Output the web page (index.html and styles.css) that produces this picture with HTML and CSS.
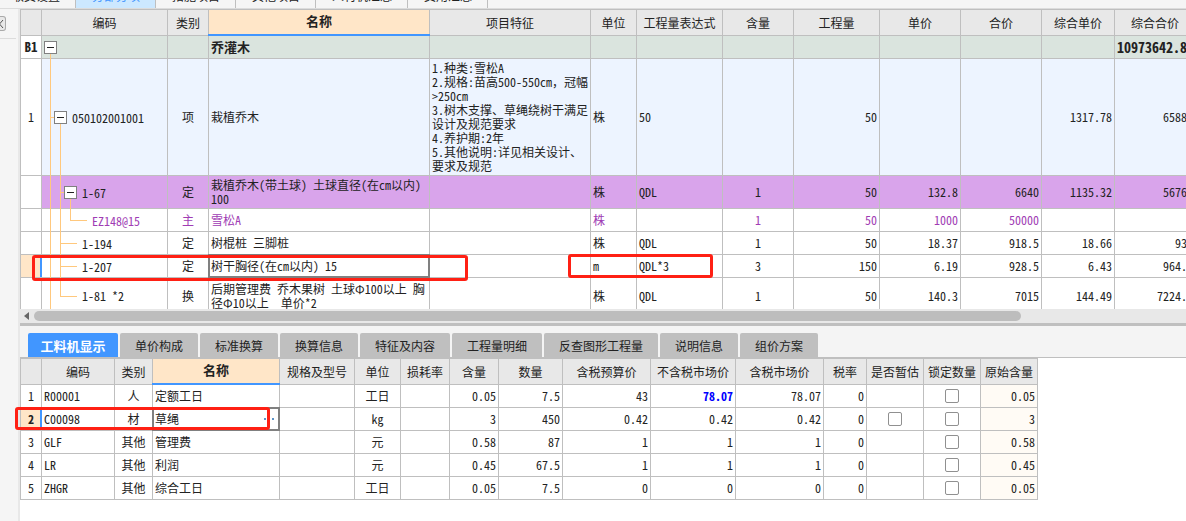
FILE: index.html
```html
<!DOCTYPE html>
<html lang="zh-CN">
<head>
<meta charset="utf-8">
<title>分部分项</title>
<link rel="stylesheet" href="styles.css">
</head>
<body>
<div class="app">
  <nav class="top-tabs">
    <button class="top-tab">取费设置</button>
    <button class="top-tab active">分部分项</button>
    <button class="top-tab">措施项目</button>
    <button class="top-tab">其他项目</button>
    <button class="top-tab">人材机汇总</button>
    <button class="top-tab">费用汇总</button>
  </nav>
  <div class="main">
    <aside class="side">
      <button class="expand" aria-label="展开">
        <svg width="7" height="10" viewBox="0 0 7 10"><path d="M6 1 2.500 5 6 9M2.500 2v6" fill="none" stroke="#555"/></svg>
      </button>
    </aside>
    <main class="work">
      <div class="grid-view">
        <table class="grid bill">
          <colgroup><col class="w21"><col class="w126"><col class="w41"><col class="w221"><col class="w161"><col class="w46"><col class="w86"><col class="w71"><col class="w86"><col class="w81"><col class="w81"><col class="w73"><col class="w81"></colgroup>
          <thead>
            <tr><th></th><th>编码</th><th>类别</th><th class="current">名称</th><th>项目特征</th><th>单位</th><th>工程量表达式</th><th>含量</th><th>工程量</th><th>单价</th><th>合价</th><th>综合单价</th><th>综合合价</th></tr>
          </thead>
          <tbody>
            <tr class="section">
              <td class="idx">B1</td>
              <td class="tree l1"><i class="v v1 lower"></i><button class="toggle" aria-label="折叠"></button></td>
              <td></td><td>乔灌木</td><td></td><td></td><td></td><td></td><td></td><td></td><td></td><td></td><td class="num">10973642.82</td>
            </tr>
            <tr class="item">
              <td class="idx">1</td>
              <td class="tree l2"><i class="v v1"></i><i class="v v2 lower"></i><i class="h h1"></i><button class="toggle" aria-label="折叠"></button><span>050102001001</span></td>
              <td class="mid">项</td><td>栽植乔木</td>
              <td class="feature">1.种类:雪松A<br>2.规格:苗高500-550cm<span class="wide">，</span>冠幅<br>&gt;250cm<br>3.树木支撑、草绳绕树干满足<br>设计及规范要求<br>4.养护期:2年<br>5.其他说明:详见相关设计、<br>要求及规范</td>
              <td>株</td><td>50</td><td></td><td class="num">50</td><td></td><td></td><td class="num">1317.78</td><td class="num">65889</td>
            </tr>
            <tr class="picked">
              <td class="idx"></td>
              <td class="tree l3"><i class="v v1"></i><i class="v v2"></i><i class="v v3 lower"></i><i class="h h2"></i><button class="toggle" aria-label="折叠"></button><span>1-67</span></td>
              <td class="mid">定</td><td>栽植乔木(带土球) 土球直径(在cm以内)<br>100</td><td></td><td>株</td><td>QDL</td><td class="mid">1</td><td class="num">50</td><td class="num">132.8</td><td class="num">6640</td><td class="num">1135.32</td><td class="num">56766</td>
            </tr>
            <tr class="material">
              <td class="idx"></td>
              <td class="tree l4"><i class="v v1"></i><i class="v v2"></i><i class="v v3 upper"></i><i class="h h3 long"></i><span>EZ148@15</span></td>
              <td class="mid">主</td><td>雪松A</td><td></td><td>株</td><td></td><td class="mid">1</td><td class="num">50</td><td class="num">1000</td><td class="num">50000</td><td></td><td></td>
            </tr>
            <tr>
              <td class="idx"></td>
              <td class="tree l3"><i class="v v1"></i><i class="v v2"></i><i class="h h2 long"></i><span>1-194</span></td>
              <td class="mid">定</td><td>树棍桩 三脚桩</td><td></td><td>株</td><td>QDL</td><td class="mid">1</td><td class="num">50</td><td class="num">18.37</td><td class="num">918.5</td><td class="num">18.66</td><td class="num">933</td>
            </tr>
            <tr>
              <td class="idx on"></td>
              <td class="tree l3"><i class="v v1"></i><i class="v v2"></i><i class="h h2 long"></i><span>1-207</span></td>
              <td class="mid">定</td><td class="focus">树干胸径(在cm以内) 15</td><td></td><td>m</td><td>QDL*3</td><td class="mid">3</td><td class="num">150</td><td class="num">6.19</td><td class="num">928.5</td><td class="num">6.43</td><td class="num">964.5</td>
            </tr>
            <tr class="double">
              <td class="idx"></td>
              <td class="tree l3"><i class="v v1"></i><i class="v v2 upper"></i><i class="h h2 long"></i><span>1-81 *2</span></td>
              <td class="mid">换</td><td>后期管理费 乔木果树 土球Φ100以上 胸<br>径Φ10以上&nbsp; 单价*2</td><td></td><td>株</td><td>QDL</td><td class="mid">1</td><td class="num">50</td><td class="num">140.3</td><td class="num">7015</td><td class="num">144.49</td><td class="num">7224.5</td>
            </tr>
          </tbody>
        </table>
      </div>
      <div class="scrollbar">
        <svg width="6" height="8" viewBox="0 0 6 8"><path d="M5 0v8L0 4z" fill="#666"/></svg>
        <div class="track"><div class="thumb"></div></div>
      </div>
      <nav class="tabs">
        <button class="tab active">工料机显示</button>
        <button class="tab">单价构成</button>
        <button class="tab">标准换算</button>
        <button class="tab">换算信息</button>
        <button class="tab">特征及内容</button>
        <button class="tab">工程量明细</button>
        <button class="tab">反查图形工程量</button>
        <button class="tab">说明信息</button>
        <button class="tab">组价方案</button>
      </nav>
      <div class="detail">
        <table class="grid">
          <colgroup><col class="w21"><col class="w73"><col class="w38"><col class="w127"><col class="w75"><col class="w46"><col class="w49"><col class="w49"><col class="w64"><col class="w88"><col class="w85"><col class="w88"><col class="w43"><col class="w57"><col class="w57"><col class="w57"></colgroup>
          <thead>
            <tr><th></th><th>编码</th><th>类别</th><th class="current">名称</th><th>规格及型号</th><th>单位</th><th>损耗率</th><th>含量</th><th>数量</th><th>含税预算价</th><th>不含税市场价</th><th>含税市场价</th><th>税率</th><th>是否暂估</th><th>锁定数量</th><th>原始含量</th></tr>
          </thead>
          <tbody>
            <tr><td class="idx">1</td><td>R00001</td><td class="mid">人</td><td>定额工日</td><td></td><td class="mid">工日</td><td></td><td class="num">0.05</td><td class="num">7.5</td><td class="num">43</td><td class="num changed">78.07</td><td class="num">78.07</td><td class="num">0</td><td></td><td class="check"><input type="checkbox" aria-label="锁定数量"></td><td class="num origin">0.05</td></tr>
            <tr><td class="idx on">2</td><td>C00098</td><td class="mid">材</td><td class="focus"><div class="editor">草绳<button class="more" aria-label="更多"><i></i><i></i><i></i></button></div></td><td></td><td class="mid">kg</td><td></td><td class="num">3</td><td class="num">450</td><td class="num">0.42</td><td class="num">0.42</td><td class="num">0.42</td><td class="num">0</td><td class="check"><input type="checkbox" aria-label="是否暂估"></td><td class="check"><input type="checkbox" aria-label="锁定数量"></td><td class="num origin">3</td></tr>
            <tr><td class="idx">3</td><td>GLF</td><td class="mid">其他</td><td>管理费</td><td></td><td class="mid">元</td><td></td><td class="num">0.58</td><td class="num">87</td><td class="num">1</td><td class="num">1</td><td class="num">1</td><td class="num">0</td><td></td><td class="check"><input type="checkbox" aria-label="锁定数量"></td><td class="num origin">0.58</td></tr>
            <tr><td class="idx">4</td><td>LR</td><td class="mid">其他</td><td>利润</td><td></td><td class="mid">元</td><td></td><td class="num">0.45</td><td class="num">67.5</td><td class="num">1</td><td class="num">1</td><td class="num">1</td><td class="num">0</td><td></td><td class="check"><input type="checkbox" aria-label="锁定数量"></td><td class="num origin">0.45</td></tr>
            <tr><td class="idx">5</td><td>ZHGR</td><td class="mid">其他</td><td>综合工日</td><td></td><td class="mid">工日</td><td></td><td class="num">0.05</td><td class="num">7.5</td><td class="num">0</td><td class="num">0</td><td class="num">0</td><td class="num">0</td><td></td><td class="check"><input type="checkbox" aria-label="锁定数量"></td><td class="num origin">0.05</td></tr>
          </tbody>
        </table>
      </div>
    </main>
  </div>
  <div class="mark mark-name"></div>
  <div class="mark mark-unit"></div>
  <div class="mark mark-material"></div>
</div>
</body>
</html>
```
FILE: styles.css
```css
* { box-sizing: border-box; }
body {
  margin: 0;
  background: #fff;
  color: #222;
  font: 12px/14px "Noto Sans CJK SC", sans-serif;
  font-feature-settings: "hwid";
}
button {
  margin: 0;
  padding: 0;
  border: 0;
  background: none;
  color: inherit;
  font: inherit;
}
.wide { font-feature-settings: normal; }
.app {
  position: relative;
  display: flex;
  flex-direction: column;
  min-height: 100vh;
  overflow: hidden;
}

/* upper page tabs */
.top-tabs {
  display: flex;
  align-items: flex-end;
  height: 9px;
  overflow: hidden;
  background: #f5f5f5;
  border-bottom: 1px solid #dcdcdc;
}
.top-tab {
  flex: none;
  padding: 4px 15px 5px 16px;
  border-right: 1px solid #bfbfbf;
}
.top-tab:first-child { margin-left: -4px; }
.top-tab.active { background: #cce8ff; color: #4196ff; }

.main { display: flex; flex: 1; }
.side {
  flex: none;
  width: 20px;
  background: #f5f5f5;
  border-right: 2px solid #e8e8e8;
}
.expand {
  display: flex;
  align-items: center;
  width: 6px;
  height: 15px;
  margin-top: 7px;
  border: 1px solid #aaa;
  border-left: 0;
  border-radius: 0 3px 3px 0;
  background: #e8e8e8;
}
.expand svg { flex: none; margin-left: -3px; }
.side::after {
  content: "";
  display: block;
  width: 16px;
  margin-top: 7px;
  border-top: 1px solid #dcdcdc;
}
.work { flex: 1; min-width: 0; }

/* data grids */
.grid-view { height: 300px; overflow: hidden; }
.grid {
  width: 0;
  table-layout: fixed;
  border-collapse: separate;
  border-spacing: 0;
  border-top: 1px solid #bfbfbf;
  border-left: 1px solid #bfbfbf;
}
.w21 { width: 21px; }
.w38 { width: 38px; }
.w41 { width: 41px; }
.w43 { width: 43px; }
.w46 { width: 46px; }
.w49 { width: 49px; }
.w57 { width: 57px; }
.w64 { width: 64px; }
.w71 { width: 71px; }
.w73 { width: 73px; }
.w75 { width: 75px; }
.w81 { width: 81px; }
.w85 { width: 85px; }
.w86 { width: 86px; }
.w88 { width: 88px; }
.w126 { width: 126px; }
.w127 { width: 127px; }
.w161 { width: 161px; }
.w221 { width: 221px; }
.grid th, .grid td {
  height: 23px;
  padding: 0 2px;
  border-right: 1px solid #bfbfbf;
  border-bottom: 1px solid #bfbfbf;
  white-space: nowrap;
  text-align: left;
  vertical-align: middle;
}
.grid th {
  height: 26px;
  padding: 0;
  background: #e8e8e8;
  font-weight: 400;
  text-align: center;
}
.grid th.current {
  position: relative;
  padding-bottom: 3px;
  background: #ffe6c8;
  font-size: 13px;
  font-weight: 700;
}
.grid th.current::after {
  content: "";
  position: absolute;
  inset: auto -1px -1px -1px;
  height: 2px;
  background: #4196ff;
}
.grid .idx { padding: 0; background: #fff; text-align: center; }
.grid .idx.on {
  position: relative;
  background: #ffe6c8;
  font-weight: 700;
}
.idx.on::after {
  content: "";
  position: absolute;
  inset: 0 -1px 0 auto;
  width: 2px;
  background: #4196ff;
}
.grid .mid, .grid .check { text-align: center; }
.grid .num { text-align: right; }
.grid .changed { color: #00f; font-weight: 700; }
.grid .origin { background: #fffbf5; }
.grid .focus { position: relative; }
.focus::after {
  content: "";
  position: absolute;
  inset: -1px;
  border: 2px solid #808080;
  pointer-events: none;
}

.grid .section td { background: #dae4de; font-size: 13px; font-weight: 700; }
.grid .section .idx { background: #fff; }
.grid .section .num { padding: 0 1px; font-size: 14px; }
.grid .item td { height: 117px; background: #edf4ff; }
.grid .item .idx { background: #fff; }
.grid .picked td { height: 33px; background: #d9a4eb; }
.grid .picked .idx { background: #fff; }
.grid .material td { color: #a03cb4; }
.grid .double td { height: 36px; }

/* tree column */
.grid .tree { position: relative; }
.tree span { display: inline-block; vertical-align: middle; }
.grid .l1 { padding-left: 2px; }
.grid .l2 { padding-left: 12px; }
.grid .l3 { padding-left: 40px; }
.grid .l4 { padding-left: 50px; }
.grid .l3:has(.toggle) { padding-left: 22px; }
.toggle {
  position: relative;
  display: inline-flex;
  align-items: center;
  justify-content: center;
  width: 13px;
  height: 13px;
  margin-right: 5px;
  border: 1px solid #808080;
  background: #fff;
  vertical-align: middle;
}
.toggle::before { content: ""; width: 7px; height: 1px; background: #222; }
.v { position: absolute; top: 0; bottom: -1px; width: 1px; background: #ffc87d; }
.v.lower { top: 50%; }
.v.upper { bottom: 50%; }
.v1 { left: 8px; }
.v2 { left: 18px; }
.v3 { left: 28px; }
.h { position: absolute; top: 50%; width: 5px; height: 1px; background: #ffc87d; }
.h.long { width: 17px; }
.h1 { left: 8px; }
.h2 { left: 18px; }
.h3 { left: 28px; }

.editor { display: flex; align-items: center; justify-content: space-between; }
.more { display: flex; gap: 2px; padding-right: 3px; }
.more i { width: 2px; height: 2px; background: #5b93c8; }

input[type="checkbox"] {
  appearance: none;
  display: block;
  width: 14px;
  height: 14px;
  margin: 0 auto;
  border: 1px solid #909090;
  border-radius: 2px;
  background: #fff;
}

/* horizontal scrollbar and splitter */
.scrollbar {
  display: flex;
  align-items: center;
  gap: 4px;
  height: 17px;
  padding-left: 4px;
  background: #e8e8e8;
  border-bottom: 3px solid #bfbfbf;
}
.track { flex: 1; }
.thumb { width: calc(100% * 6 / 7); height: 10px; border-radius: 5px; background: #bdbdbd; }

/* detail tabs */
.tabs {
  display: flex;
  gap: 2px;
  padding: 7px 8px 0;
  background: #f4f4f4;
  border-bottom: 1px solid #bfbfbf;
}
.tab {
  height: 24px;
  padding: 1px 15px 0;
  border-radius: 2px 2px 0 0;
  background: #bfbfbf;
  white-space: nowrap;
}
.tab.active {
  min-width: 90px;
  padding: 1px 12px 0;
  background: #4196ff;
  color: #fff;
  font-size: 13px;
  font-weight: 700;
}

/* red review frames laid over the grids */
.mark {
  position: absolute;
  border: 3px solid #ff2014;
  border-radius: 3px;
  pointer-events: none;
}
.mark-name { left: 32px; top: 255px; width: 436px; height: 26px; }
.mark-unit { left: 568px; top: 254px; width: 145px; height: 24px; }
.mark-material { left: 15px; top: 407px; width: 255px; height: 23px; }
```
